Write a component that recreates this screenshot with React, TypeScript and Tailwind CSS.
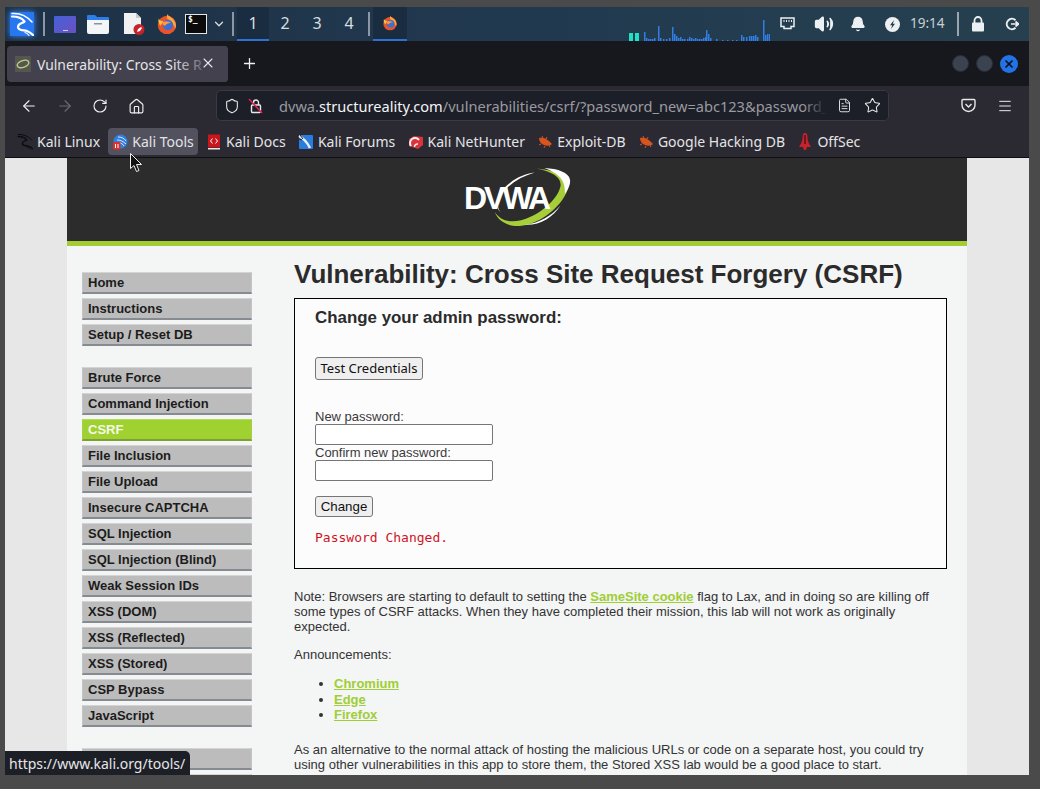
import React from "react";
import { ArrowLeft, ArrowRight, RotateCw, Home, Shield, Star, Menu, Plus, X, ChevronDown, Bell, Volume2, FileText } from "lucide-react";

const group1 = ["Home", "Instructions", "Setup / Reset DB"];
const group2 = ["Brute Force", "Command Injection", "CSRF", "File Inclusion", "File Upload", "Insecure CAPTCHA", "SQL Injection", "SQL Injection (Blind)", "Weak Session IDs", "XSS (DOM)", "XSS (Reflected)", "XSS (Stored)", "CSP Bypass", "JavaScript"];
const group3 = ["", ""];

const bars: [number, number][] = [[644,9],[646,3],[648,2],[650,2],[652,2],[654,3],[658,15],[660,3],[663,2],[666,2],[669,3],[672,14],[674,7],[676,5],[678,3],[680,4],[682,2],[684,2],[687,2],[689,4],[691,3],[693,2],[695,3],[697,2],[699,2],[701,2],[703,3],[705,4],[706,11],[708,7],[710,3],[716,2],[722,1],[727,1],[732,1],[736,1],[741,6],[743,4],[746,4],[749,5],[751,5],[753,5],[755,6],[757,4],[763,21],[765,6],[767,7],[769,7]];

function Firefox({ size = 22 }: { size?: number }) {
  return (
    <svg width={size} height={size} viewBox="0 0 24 24">
      <circle cx="12" cy="13" r="10" fill="#e8532b" />
      <path d="M12 1c2 3 7 4 9 9 1 3 1 5 0 7-2-5-5-9-9-11z" fill="#ffa436" />
      <path d="M3 6c1 2 2 3 5 3l-3 5c-2-2-3-5-2-8z" fill="#ffbd3f" />
      <circle cx="13" cy="13" r="5.6" fill="#3b6fd8" />
      <path d="M7 10c3-1 7-1 9 1-3 0-5 1-6 3-2 0-3-2-3-4z" fill="#ff9b3a" />
    </svg>
  );
}

function Kali({ color = "#fff", size = 24 }: { color?: string; size?: number }) {
  return (
    <svg width={size} height={size} viewBox="0 0 24 24" fill="none" stroke={color} strokeLinecap="round" strokeLinejoin="round">
      <path d="M2 1.500C8 1 16 3 22 10" strokeWidth="1.500" />
      <path d="M2 4.500C7 4.500 12 6 14.500 9.500 13 11.500 8 11 8 15c0 4 6 3 9 4 2 .7 4 2 6 4" strokeWidth="2.200" />
      <path d="M15 20.500c1.500.5 3 1.500 4 3" strokeWidth="1.200" />
    </svg>
  );
}

function Bookmark({ icon, label, hover }: { icon: React.ReactNode; label: string; hover?: boolean }) {
  return (
    <div className={`flex items-center h-[27px] px-[4px] rounded-[4px] gap-[4px] text-[14px] text-[#e4e4e6] whitespace-nowrap ${hover ? "bg-[#52525e]" : ""}`}>
      <span className="w-[16px] h-[16px] flex items-center justify-center shrink-0">{icon}</span>
      <span>{label}</span>
    </div>
  );
}

const Bug = () => (
  <svg width="16" height="16" viewBox="0 0 16 16">
    <path d="M2 4c3-1 7 0 10 3 1 1 2 2 3 3-2 2-5 2-8 1-3-1-5-4-5-7z" fill="#d9541e" />
    <path d="M6 4L5 2M9 5l1-2M4 10l-2 1M8 12l-1 2M12 11l1 2" stroke="#d9541e" strokeWidth="1" />
  </svg>
);

function NavItem({ label }: { label: string }) {
  const active = label === "CSRF";
  return (
    <div className={`h-[22px] w-[170px] shrink-0 pl-[5px] flex items-center text-[13px] font-bold border-t border-b-2 border-x ${active ? "bg-[#9fd231] text-[#f4f8e8] border-t-[#b2da5e] border-b-[#7e9f38] border-x-[#a7d040]" : "bg-[#bcbcbc] text-[#1c1c1c] border-t-[#d4d4d4] border-b-[#868b91] border-x-[#c4c4c4]"}`}>
      {label}
    </div>
  );
}

function Panel() {
  return (
    <div className="h-[34px] shrink-0 flex items-center bg-gradient-to-r from-[#1e3146] via-[#21394f] to-[#27404f] text-[#d9dee2] text-[16px]" style={{ fontFamily: '"Noto Sans", sans-serif' }}>
      <div className="w-[5px]" />
      <div className="w-[24px] h-[24px] bg-[#2778f0] flex items-center justify-center shadow-[0_0_6px_#3b8cff]">
        <Kali size={24} />
      </div>
      <div className="w-[2px] h-[24px] bg-[#8b98a4] ml-[9px]" />
      <div className="w-[22px] h-[17px] ml-[9px] rounded-[1px] bg-gradient-to-br from-[#3f62d6] to-[#6a4fc4] flex items-end justify-center pb-[1px]">
        <div className="w-[5px] h-[1px] bg-[#c8d4ff] mb-[1px]" />
      </div>
      <svg className="ml-[11px]" width="22" height="20" viewBox="0 0 22 20">
        <path d="M0 2a1 1 0 0 1 1-1h7l2 2h11a1 1 0 0 1 1 1v3H0z" fill="#2d7de8" />
        <path d="M0 6h22v12a2 2 0 0 1-2 2H2a2 2 0 0 1-2-2z" fill="#f4f5f7" />
        <rect x="7" y="9" width="8" height="1.5" fill="#8892a0" />
      </svg>
      <svg className="ml-[14px]" width="22" height="22" viewBox="0 0 22 22">
        <path d="M1 0h12l5 5v16H1z" fill="#f1f1f1" />
        <path d="M13 0l5 5h-5z" fill="#c9c9c9" />
        <circle cx="16" cy="16.500" r="5.500" fill="#c5222a" />
        <path d="M14 19l1-3 3-2 1 1-2 3z" fill="#fff" />
      </svg>
      <div className="ml-[11px] flex"><Firefox size={22} /></div>
      <div className="ml-[7px] w-[22px] h-[20px] bg-[#0b0b0b] border border-[#e5e5e5] text-[#fff] text-[8px] font-bold leading-[10px] pl-[2px]" style={{ fontFamily: '"DejaVu Sans Mono", monospace' }}>$_</div>
      <ChevronDown className="ml-[5px]" size={14} strokeWidth={2.2} color="#d9dee2" />
      <div className="w-[2px] h-[24px] bg-[#8b98a4] ml-[6px]" />
      <div className="ml-[3px] flex h-[34px]">
        {["1", "2", "3", "4"].map((n, i) => (
          <div key={n} className={`w-[32px] flex items-center justify-center border-b-2 ${i === 0 ? "bg-[#1a2c40] border-[#2c72d4]" : "border-transparent"}`}>{n}</div>
        ))}
      </div>
      <div className="w-[2px] h-[24px] bg-[#8b98a4] ml-[3px]" />
      <div className="ml-[3px] w-[34px] h-[34px] flex items-center justify-center bg-[#1a2c40] border-b-2 border-[#2c72d4]">
        <Firefox size={16} />
      </div>
      <div className="ml-[222px] h-[34px] w-[141px] flex items-end">
        <svg width="141" height="34" viewBox="629 7 141 34">
          <rect x="629" y="33" width="4" height="8" fill="#1fe0c4" />
          <rect x="635" y="33" width="4" height="8" fill="#1fe0c4" />
          {bars.map(([x, h]) => (
            <rect key={x} x={x} y={41 - h} width="1.5" height={h} fill="#2f7fe6" />
          ))}
        </svg>
      </div>
      <svg className="ml-[10px]" width="15" height="14" viewBox="0 0 15 14" fill="none">
        <path d="M1 1h13v8.500h-3v2H4v-2H1z" stroke="#ecf0f2" strokeWidth="1.500" />
        <path d="M4 3v2M6.500 3v2M9 3v2M11.500 3v2" stroke="#ecf0f2" strokeWidth="1" />
      </svg>
      <Volume2 className="ml-[19px]" size={20} fill="#ecf0f2" color="#ecf0f2" strokeWidth={2} />
      <Bell className="ml-[16px]" size={16} fill="#ecf0f2" color="#ecf0f2" />
      <svg className="ml-[19px]" width="15" height="15" viewBox="0 0 15 15">
        <circle cx="7.500" cy="7.500" r="7.500" fill="#ecf0f2" />
        <path d="M9 3L5 8.200h2.200L6 12l4-5.200H7.800z" fill="#21394f" />
      </svg>
      <span className="ml-[10px] w-[35px] text-[13.500px] text-[#c9d0d4] leading-none whitespace-nowrap">19:14</span>
      <div className="w-[2px] h-[24px] bg-[#9aa5ac] ml-[12px]" />
      <svg className="ml-[12px]" width="14" height="16" viewBox="0 0 14 16">
        <path d="M3.500 7V4.500a3.500 3.500 0 0 1 7 0V7" fill="none" stroke="#ecf0f2" strokeWidth="1.800" />
        <rect x="1" y="6.500" width="12" height="9" rx="1" fill="#ecf0f2" />
      </svg>
      <svg className="ml-[20px]" width="14" height="14" viewBox="0 0 14 14" fill="none" stroke="#ecf0f2" strokeWidth="2">
        <path d="M10.500 3.200A5.200 5.200 0 1 0 10.500 10.800" />
        <path d="M6 7h7.500M10.500 4.500L13.500 7l-3 2.500" strokeWidth="1.700" />
      </svg>
    </div>
  );
}

function Browser() {
  return (
    <div className="shrink-0" style={{ fontFamily: '"Noto Sans", sans-serif' }}>
      <div className="h-[45px] bg-[#17171e] flex items-center relative">
        <div className="ml-[2px] mt-[1px] w-[221px] h-[36px] rounded-[4px] bg-[#42414d] flex items-center relative overflow-hidden text-[#e6e6e8] text-[13.900px]">
          <div className="ml-[8px] w-[16px] h-[16px] bg-[#565650] flex items-center justify-center">
            <svg width="14" height="10" viewBox="0 0 14 10" fill="none"><ellipse cx="7" cy="5" rx="6" ry="3.300" stroke="#b8cc80" strokeWidth="1.500" transform="rotate(-20 7 5)" /></svg>
          </div>
          <span className="ml-[6px] pt-[2px] whitespace-nowrap">Vulnerability: Cross Site R</span>
          <div className="absolute right-0 top-0 h-full w-[55px] bg-gradient-to-r from-transparent to-[#42414d] via-[#42414d]/70" />
          <X className="absolute right-[12px] top-[9px]" size={16} strokeWidth={1.600} color="#e6e6e8" />
        </div>
        <Plus className="ml-[13px]" size={17} strokeWidth={1.800} color="#f1f1f3" />
        <div className="ml-auto mr-[11px] flex gap-[7px] items-center">
          <div className="w-[17px] h-[17px] rounded-full bg-[#3b4250] border border-[#2a2d36]" />
          <div className="w-[17px] h-[17px] rounded-full bg-[#3b4250] border border-[#2a2d36]" />
          <div className="w-[18px] h-[18px] rounded-full bg-[#2272e8] flex items-center justify-center">
            <X size={12} strokeWidth={3.500} color="#10131a" />
          </div>
        </div>
      </div>
      <div className="h-[39px] bg-[#2b2a33] flex items-center relative">
        <ArrowLeft className="ml-[15px] mt-[1px]" size={18} strokeWidth={1.500} color="#f0f0f2" />
        <ArrowRight className="ml-[18px] mt-[1px]" size={18} strokeWidth={1.500} color="#6a6a72" />
        <RotateCw className="ml-[18px] mt-[1px]" size={16} strokeWidth={1.700} color="#f0f0f2" />
        <Home className="ml-[20px] mt-[1px]" size={17} strokeWidth={1.600} color="#f0f0f2" />
        <div className="ml-[71px] w-[673px] h-[31px] rounded-[5px] bg-[#1d1f28] border border-[#3a3a42] flex items-center relative overflow-hidden text-[14.600px] text-[#9a9aa0] whitespace-nowrap">
          <Shield className="ml-[7px] shrink-0" size={16} strokeWidth={1.600} color="#e8e8ea" />
          <svg className="ml-[8px] shrink-0" width="16" height="16" viewBox="0 0 16 16" fill="none">
            <path d="M5.500 7V4.500a2.500 2.500 0 0 1 5 0V7" stroke="#e8e8ea" strokeWidth="1.400" />
            <rect x="3.500" y="7" width="9" height="7.500" rx="1" stroke="#e8e8ea" strokeWidth="1.400" />
            <path d="M1 1l13 14" stroke="#e0234e" strokeWidth="1.500" />
          </svg>
          <span className="ml-[15px] pt-[2px]">dvwa.<span className="text-[#f4f4f6]">structureality.com</span>/vulnerabilities/csrf/?password_new=abc123&amp;password_</span>
          <div className="absolute right-0 top-0 h-full w-[85px] bg-gradient-to-r from-transparent to-[#1d1f28] to-[28%]" />
          <FileText className="absolute right-[36px] top-[7px]" size={15} strokeWidth={1.500} color="#e8e8ea" />
          <Star className="absolute right-[7px] top-[6px]" size={17} strokeWidth={1.500} color="#e8e8ea" />
        </div>
        <svg className="ml-[72px]" width="15" height="15" viewBox="0 0 15 15" fill="none" stroke="#e8e8ea" strokeWidth="1.400">
          <path d="M2 1.500h11a1 1 0 0 1 1 1V7a6.500 6.500 0 0 1-13 0V2.500a1 1 0 0 1 1-1z" />
          <path d="M4.500 6l3 3 3-3" />
        </svg>
        <Menu className="ml-[21px]" size={16} strokeWidth={1.500} color="#e8e8ea" />
      </div>
      <div className="h-[33px] bg-[#2b2a33] border-b border-[#0f0f12] flex items-center pl-[8px] pt-[1px] gap-[4.300px]">
        <Bookmark icon={<Kali color="#0c0c0c" size={17} />} label="Kali Linux" />
        <Bookmark hover icon={
          <svg width="16" height="16" viewBox="0 0 16 16" fill="none">
            <circle cx="8.500" cy="7.500" r="7" fill="#2d7fe0" />
            <path d="M6 3c3 0 6 1 8 4M5 6c3 0 6 1 9 4M7 9c2 0 4 1 5 3" stroke="#dfeaf7" strokeWidth="1" />
            <rect x="1" y="8" width="7.500" height="7.500" rx="1.500" fill="#e02f2f" />
            <path d="M3.500 10v4M6 10v4" stroke="#fff" strokeWidth="1" />
          </svg>
        } label="Kali Tools" />
        <Bookmark icon={
          <svg width="14" height="16" viewBox="0 0 14 16" fill="none">
            <rect x="1" y="0.500" width="12" height="13" fill="#c8161c" />
            <rect x="1" y="14" width="12" height="1.500" fill="#e8e8e8" />
            <path d="M5.500 4.500L3.500 7l2 2.500M8.500 4.500l2 2.500-2 2.500" stroke="#fff" strokeWidth="1" />
          </svg>
        } label="Kali Docs" />
        <Bookmark icon={
          <svg width="16" height="16" viewBox="0 0 16 16" fill="none">
            <rect x="1" y="1" width="14" height="14" rx="1" fill="#2a7de0" />
            <path d="M1 2c4 2 8 6 11 12" stroke="#f0f0f0" strokeWidth="2.500" />
            <path d="M2 1l3 4M1 5l3 1" stroke="#222" strokeWidth="1" />
          </svg>
        } label="Kali Forums" />
        <Bookmark icon={
          <svg width="16" height="16" viewBox="0 0 16 16" fill="none">
            <path d="M1 5l5-3 9 1v8l-5 4-9-3z" fill="#d8343a" />
            <path d="M3 12A5 5 0 0 1 11 6" stroke="#f0f0f0" strokeWidth="2" />
            <path d="M6.500 13A3 3 0 0 1 10 10" stroke="#f0f0f0" strokeWidth="1.500" />
          </svg>
        } label="Kali NetHunter" />
        <Bookmark icon={<Bug />} label="Exploit-DB" />
        <Bookmark icon={<Bug />} label="Google Hacking DB" />
        <Bookmark icon={<svg width="12" height="17" viewBox="0 0 12 17"><path d="M6 0c2 0 2.500 2 2.500 5 0 3 1.500 6 3.500 9H8l-1 3H5l-1-3H0c2-3 3.500-6 3.500-9C3.500 2 4 0 6 0z" fill="#c8232c" /><rect x="5" y="2" width="2" height="9" fill="#7a1018" /></svg>} label="OffSec" />
      </div>
    </div>
  );
}

function Logo() {
  return (
    <div className="relative w-[115px] h-[70px]">
      <svg className="absolute left-0 top-0" width="111" height="68" viewBox="0 0 345 210">
        <path d="M108 148C118 178 150 194 185 192 250 188 325 125 337 70 342 40 305 20 238 13 290 24 318 42 312 70 302 112 245 160 190 174 150 184 122 172 108 148z" fill="#a6ce39" />
        <path d="M262 12C305 14 338 26 342 48 344 62 336 78 326 92 328 60 318 32 262 12z" fill="#fff" />
        <path d="M128 152C104 130 112 92 155 58 178 40 205 30 232 26 200 36 172 50 150 70 118 98 108 128 128 152z" fill="#fff" />
        <path d="M200 188C245 184 285 160 312 128 290 165 245 192 200 188z" fill="#fff" />
      </svg>
      <span className="absolute left-[4px] top-[16px] text-[#fff] text-[32px] font-bold leading-[36px] tracking-[-3px] whitespace-nowrap" style={{ fontFamily: '"Liberation Sans", sans-serif' }}>DVWA</span>
    </div>
  );
}

function Content() {
  return (
    <div className="flex-1 min-h-0 overflow-hidden bg-[#e7e7e7] relative" style={{ fontFamily: '"Liberation Sans", sans-serif' }}>
      <div className="ml-[62px] w-[900px] bg-[#f4f5f5] text-[13px] text-[#2a2a2a]">
        <div className="h-[83px] bg-[#2b2c2b] flex items-center justify-center"><div className="ml-[1px] mt-[-2px]"><Logo /></div></div>
        <div className="h-[5px] bg-[#a3cd33]" />
        <div className="flex pt-[26px]">
          <div className="ml-[15px] w-[170px] shrink-0 flex flex-col gap-[4px]">
            {group1.map((l, i) => <NavItem key={i} label={l} />)}
            <div className="h-[13px]" />
            {group2.map((l, i) => <NavItem key={i} label={l} />)}
            <div className="h-[13px]" />
            {group3.map((l, i) => <NavItem key={i} label={l} />)}
          </div>
          <div className="ml-[42px] w-[653px] shrink-0 -mt-[13px]">
            <h1 className="text-[26px] leading-[30px] font-bold text-[#2b2b2b] mb-[9px] whitespace-nowrap">Vulnerability: Cross Site Request Forgery (CSRF)</h1>
            <div className="border border-black bg-[#fdfcfd] h-[271px] pl-[20px] pt-[9px]">
              <h3 className="text-[16.900px] leading-[20px] font-bold text-[#2b2b2b]">Change your admin password:</h3>
              <button className="block mt-[29px] h-[23px] w-[108px] rounded-[3px] border border-[#767676] bg-[#efefef] text-[#111] text-[13px]" style={{ fontFamily: '"Noto Sans", sans-serif' }}>Test Credentials</button>
              <div className="mt-[29px] leading-[15px] text-[#3a3a3a]">New password:</div>
              <div className="h-[21px] w-[178px] rounded-[2px] border border-[#767676] bg-white" />
              <div className="leading-[15px] text-[#3a3a3a]">Confirm new password:</div>
              <div className="h-[21px] w-[178px] rounded-[2px] border border-[#767676] bg-white" />
              <button className="block mt-[15px] h-[21px] w-[58px] rounded-[3px] border border-[#767676] bg-[#efefef] text-[#111] text-[13.300px]">Change</button>
              <pre className="mt-[13px] text-[13px] leading-[15px] text-[#d0131e]" style={{ fontFamily: '"DejaVu Sans Mono", monospace' }}>Password Changed.</pre>
            </div>
            <p className="mt-[20px] leading-[15px] text-[#333]">
              Note: Browsers are starting to default to setting the <a className="font-bold underline text-[#9fce35]">SameSite cookie</a> flag to Lax, and in doing so are killing off<br />
              some types of CSRF attacks. When they have completed their mission, this lab will not work as originally<br />
              expected.
            </p>
            <p className="mt-[13px] leading-[15px] text-[#333]">Announcements:</p>
            <ul className="mt-[14px] pl-[40px] list-disc leading-[15.500px] text-[#333]">
              <li><a className="font-bold underline text-[#9fce35]">Chromium</a></li>
              <li><a className="font-bold underline text-[#9fce35]">Edge</a></li>
              <li><a className="font-bold underline text-[#9fce35]">Firefox</a></li>
            </ul>
            <p className="mt-[19px] leading-[15px] text-[#333] whitespace-nowrap">
              As an alternative to the normal attack of hosting the malicious URLs or code on a separate host, you could try<br />
              using other vulnerabilities in this app to store them, the Stored XSS lab would be a good place to start.
            </p>
          </div>
        </div>
      </div>
      <div className="absolute left-0 bottom-0 h-[24px] w-[185px] bg-[#1c1f26] rounded-tr-[5px] pl-[4px] flex items-center text-[14px] text-[#e6e6e8] whitespace-nowrap" style={{ fontFamily: '"Noto Sans", sans-serif' }}>https://www.kali.org/tools/</div>
    </div>
  );
}

export default function App() {
  return (
    <div className="relative w-[1040px] h-[789px] bg-[#4a4a4a] pl-[5px] pr-[11px] pt-[7px] pb-[14px] flex flex-col overflow-hidden">
      <Panel />
      <Browser />
      <Content />
      <svg className="absolute left-[130px] top-[153px]" width="13" height="19" viewBox="0 0 13 19">
        <path d="M.5.500v15l3.500-3 2.500 6 2.500-1-2.500-6h5z" fill="#111" stroke="#eee" strokeWidth="1" />
      </svg>
    </div>
  );
}
